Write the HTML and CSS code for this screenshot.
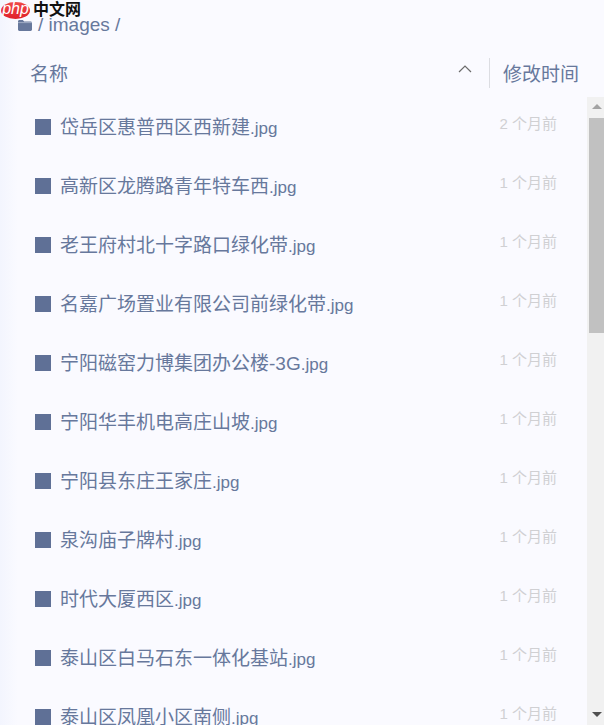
FILE: index.html
```html
<!DOCTYPE html>
<html lang="zh-CN">
<head>
<meta charset="UTF-8">
<meta name="viewport" content="width=device-width, initial-scale=1.0">
<link rel="stylesheet" href="styles.css">
<title>images</title>
</head>
<body>
<div class="logo">
  <span class="logo-php">php</span>
  <span class="logo-cn">中文网</span>
</div>
<div class="path">
  <svg class="folder" width="14" height="11" viewBox="0 0 14 11"><path d="M0 1.500C0 .7.6 0 1.400 0h3.400l1.400 1.600h6.400c.8 0 1.400.6 1.400 1.400v6.600c0 .8-.6 1.400-1.400 1.400H1.400C.6 11 0 10.400 0 9.600z" fill="#67789c"/><path d="M0 2.600h14" stroke="#b9c2d6" stroke-width=".7"/></svg>
  <span>/ images /</span>
</div>
<div class="table-head">
  <div class="head-name">名称</div>
  <svg class="sort" width="14" height="8" viewBox="0 0 14 8"><path d="M1 7l6-6 6 6" fill="none" stroke="#6b6b6b" stroke-width="1.200"/></svg>
  <div class="head-time">修改时间</div>
</div>
<div class="list-wrap">
  <div class="list">
    <div class="row"><i class="file-icon"></i><span class="name">岱岳区惠普西区西新建<span class="ext">.jpg</span></span><span class="time">2 个月前</span></div>
    <div class="row"><i class="file-icon"></i><span class="name">高新区龙腾路青年特车西<span class="ext">.jpg</span></span><span class="time">1 个月前</span></div>
    <div class="row"><i class="file-icon"></i><span class="name">老王府村北十字路口绿化带<span class="ext">.jpg</span></span><span class="time">1 个月前</span></div>
    <div class="row"><i class="file-icon"></i><span class="name">名嘉广场置业有限公司前绿化带<span class="ext">.jpg</span></span><span class="time">1 个月前</span></div>
    <div class="row"><i class="file-icon"></i><span class="name">宁阳磁窑力博集团办公楼-3G<span class="ext">.jpg</span></span><span class="time">1 个月前</span></div>
    <div class="row"><i class="file-icon"></i><span class="name">宁阳华丰机电高庄山坡<span class="ext">.jpg</span></span><span class="time">1 个月前</span></div>
    <div class="row"><i class="file-icon"></i><span class="name">宁阳县东庄王家庄<span class="ext">.jpg</span></span><span class="time">1 个月前</span></div>
    <div class="row"><i class="file-icon"></i><span class="name">泉沟庙子牌村<span class="ext">.jpg</span></span><span class="time">1 个月前</span></div>
    <div class="row"><i class="file-icon"></i><span class="name">时代大厦西区<span class="ext">.jpg</span></span><span class="time">1 个月前</span></div>
    <div class="row"><i class="file-icon"></i><span class="name">泰山区白马石东一体化基站<span class="ext">.jpg</span></span><span class="time">1 个月前</span></div>
    <div class="row"><i class="file-icon"></i><span class="name">泰山区凤凰小区南侧<span class="ext">.jpg</span></span><span class="time">1 个月前</span></div>
  </div>
  <div class="scrollbar">
    <div class="scroll-up"></div>
    <div class="scroll-thumb"></div>
    <div class="scroll-down"></div>
  </div>
</div>
<div class="foot"></div>
</body>
</html>
```

FILE: styles.css
```css
html, body {
  height: 100%;
}
body {
  margin: 0;
  overflow: hidden;
  background: linear-gradient(to right, #f3f5fe, #fafaff 18px);
  font-family: "Liberation Sans", "Noto Sans CJK SC", sans-serif;
  color: #67789c;
}
.logo {
  position: absolute;
  top: 0;
  left: 0;
  width: 90px;
  height: 20px;
}
.logo-php {
  position: absolute;
  top: 2px;
  left: 1px;
  width: 29px;
  height: 17px;
  border-radius: 50%;
  background: linear-gradient(#f04a4a, #e0202a);
  color: #fff;
  font: italic 16px/14px "Liberation Sans", sans-serif;
  text-align: center;
}
.logo-cn {
  position: absolute;
  top: 2px;
  left: 33px;
  font-size: 16px;
  line-height: 16px;
  font-weight: 700;
  color: #111;
}
.path {
  display: flex;
  align-items: center;
  gap: 6px;
  height: 20px;
  padding: 15px 0 0 18px;
  font-size: 19px;
  line-height: 20px;
}
.table-head {
  display: flex;
  align-items: flex-start;
  height: 30px;
  margin-top: 23px;
  padding: 0 25px 0 30px;
  font-size: 19px;
  line-height: 34px;
}
.head-name {
  flex: 1;
}
.sort {
  margin: 7px 17px 0 0;
}
.head-time {
  height: 30px;
  padding-left: 13px;
  border-left: 1px solid #dcdde2;
}
.list-wrap {
  display: flex;
  margin-top: 9px;
  height: 628px;
}
.list {
  flex: 1;
  overflow: hidden;
}
.row {
  display: flex;
  align-items: center;
  height: 59px;
  padding: 0 30px 0 35px;
}
.file-icon {
  width: 16px;
  height: 16px;
  margin-right: 9px;
  background: #5f7096;
}
.name {
  flex: 1;
  padding-bottom: 2px;
  font-size: 19px;
}
.ext {
  font-size: 17px;
}
.time {
  margin-top: -8px;
  font-size: 15px;
  color: #d0d0d3;
}
.scrollbar {
  position: relative;
  width: 17px;
  background: #f1f1f1;
}
.scroll-up {
  position: relative;
  height: 21px;
}
.scroll-up::after {
  content: "";
  position: absolute;
  top: 7px;
  left: 5px;
  border: 5px solid transparent;
  border-top: 0;
  border-bottom-color: #a3a3a3;
}
.scroll-thumb {
  width: 15px;
  margin-left: 2px;
  height: 215px;
  background: #c1c1c1;
}
.scroll-down {
  position: absolute;
  bottom: 8px;
  left: 5px;
  border: 5px solid transparent;
  border-bottom: 0;
  border-top-color: #505050;
}
.foot {
  height: 3px;
  background: #fff;
}
```
